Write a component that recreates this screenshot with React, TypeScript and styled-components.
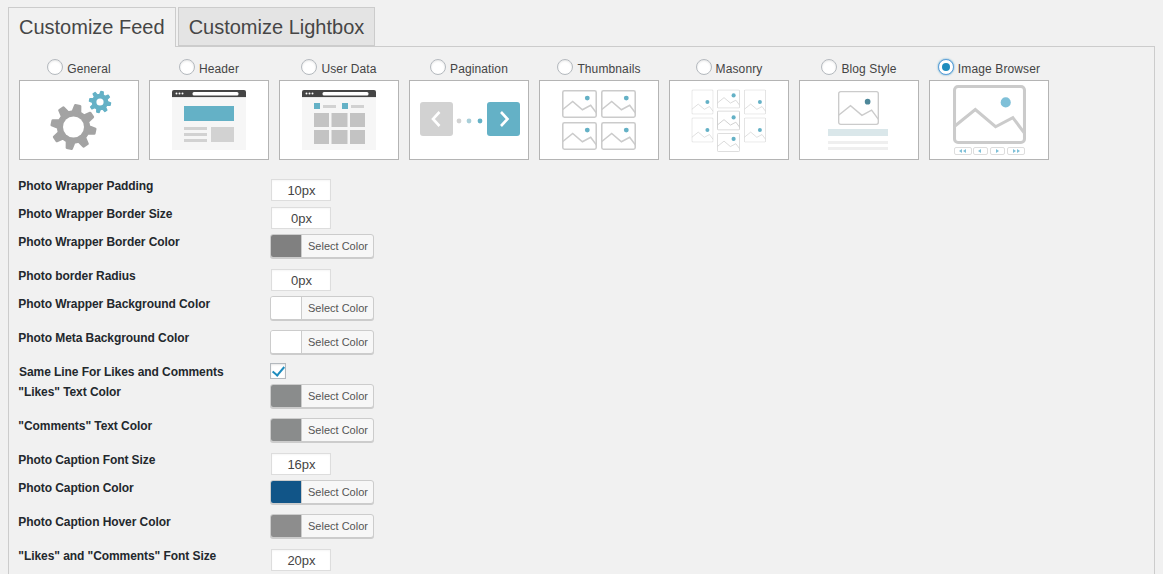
import React from "react";
import styled, { createGlobalStyle } from "styled-components";

const Global = createGlobalStyle`
  html, body { margin: 0; padding: 0; background: #f1f1f1; height: 574px; overflow: hidden; }
  body { font-family: "Liberation Sans", Arial, sans-serif; color: #444; }
`;

const Page = styled.div`
  padding: 7px 8px 0;
`;
const Tabs = styled.div`
  display: flex;
  gap: 2px;
  height: 39px;
  position: relative;
  z-index: 1;
`;
const Tab = styled.div<{ $active?: boolean }>`
  box-sizing: border-box;
  height: ${(p) => (p.$active ? "40px" : "39px")};
  padding: 0 10px;
  font-size: 20px;
  line-height: 38px;
  color: #464646;
  background: ${(p) => (p.$active ? "#f1f1f1" : "#e4e4e4")};
  border: 1px solid #ccc;
  border-bottom: ${(p) => (p.$active ? "0" : "1px solid #ccc")};
`;
const Panel = styled.div`
  box-sizing: border-box;
  border: 1px solid #ccc;
  width: 1147px;
  height: 560px;
  padding: 12px 10px 0 10px;
`;
const Chooser = styled.div`
  display: flex;
  gap: 10px;
  margin-bottom: 16px;
`;
const Choice = styled.label`
  width: 120px;
  display: flex;
  flex-direction: column;
  align-items: center;
`;
const ChoiceHead = styled.span`
  height: 21px;
  display: flex;
  align-items: flex-start;
  gap: 4px;
  font-size: 12px;
  line-height: 18px;
  letter-spacing: 0.12px;
  color: #444;
  white-space: nowrap;
  span { padding-top: 1px; }
`;
const Radio = styled.input.attrs({ type: "radio", readOnly: true })`
  appearance: none;
  box-sizing: border-box;
  width: 16px;
  height: 16px;
  margin: 0;
  border-radius: 50%;
  border: 1px solid #b4b9be;
  background: #fff;
  box-shadow: inset 0 1px 2px rgba(0, 0, 0, 0.1);
  display: grid;
  place-items: center;
  &:checked {
    border-color: #5b9dd9;
    box-shadow: 0 0 2px rgba(30, 140, 190, 0.8);
  }
  &:checked::before {
    content: "";
    width: 8px;
    height: 8px;
    border-radius: 50%;
    background: #1e8cbe;
  }
`;
const Thumb = styled.svg`
  display: block;
  box-sizing: border-box;
  width: 120px;
  height: 80px;
  background: #fff;
  border: 1px solid #b4b4b4;
`;
const Row = styled.div<{ $h: number }>`
  display: grid;
  grid-template-columns: 251px 1fr;
  height: ${(p) => p.$h}px;
`;
const Label = styled.div<{ $flush?: boolean }>`
  font-size: 12px;
  font-weight: 700;
  line-height: 16px;
  letter-spacing: -0.07px;
  color: #23282d;
  padding-top: 2px;
  margin-left: ${(p) => (p.$flush ? "0" : "-0.7px")};
  white-space: nowrap;
`;
const Field = styled.input.attrs({ type: "text", readOnly: true })`
  box-sizing: border-box;
  display: block;
  width: 60px;
  height: 22px;
  margin: 3px 0 0 1px;
  padding: 0 0 0 1px;
  border: 1px solid #ddd;
  background: #fff;
  box-shadow: inset 0 1px 2px rgba(0, 0, 0, 0.04);
  font: 13px "Liberation Sans", Arial, sans-serif;
  color: #444;
  text-align: center;
  outline: none;
`;
const ColorButton = styled.button`
  box-sizing: border-box;
  display: flex;
  width: 104px;
  height: 24px;
  margin: 2px 0 0;
  padding: 0;
  border: 1px solid #ccc;
  border-radius: 3px;
  background: #f7f7f7;
  box-shadow: 0 1px 0 #ccc;
  overflow: hidden;
`;
const Swatch = styled.span`
  width: 30px;
  height: 100%;
  flex: none;
  border-right: 1px solid #ccc;
`;
const ColorText = styled.span`
  flex: 1;
  padding-left: 1px;
  font: 11px/22px "Liberation Sans", Arial, sans-serif;
  color: #555;
  text-align: center;
`;
const Check = styled.input.attrs({ type: "checkbox", readOnly: true })`
  appearance: none;
  box-sizing: border-box;
  display: grid;
  place-items: center;
  width: 16px;
  height: 16px;
  margin: 1px 0 0 0;
  border: 1px solid #b4b9be;
  background: #fff;
  box-shadow: inset 0 1px 2px rgba(0, 0, 0, 0.1);
  &:checked::before {
    content: "";
    width: 5px;
    height: 10px;
    margin-top: -2px;
    border: solid #1e8cbe;
    border-width: 0 2.4px 2.4px 0;
    transform: rotate(40deg);
  }
`;

const gearPath = (cx: number, cy: number, rOut: number, rIn: number, hole: number, teeth: number) => {
  const pts: string[] = [];
  const step = (Math.PI * 2) / teeth;
  for (let i = 0; i < teeth; i++) {
    const a = i * step - Math.PI / 2 + step / 4;
    const list: [number, number][] = [
      [rIn, a - step * 0.3],
      [rOut, a - step * 0.14],
      [rOut, a + step * 0.14],
      [rIn, a + step * 0.3],
    ];
    list.forEach(([r, t]) => pts.push(`${(cx + r * Math.cos(t)).toFixed(2)} ${(cy + r * Math.sin(t)).toFixed(2)}`));
  }
  return `M${pts.join("L")}Z`;
};

const BLUE = "#64b1c6";
const GREY = "#d2d2d2";

type PicProps = { x: number; y: number; w: number; h: number; dot?: string; sw?: number; line?: string; dotR?: number };

const Pic = ({ x, y, w, h, dot = BLUE, sw = 3, line = "#cbcbcb", dotR = 5 }: PicProps) => {
  const vh = (h * 72) / w;
  return (
    <svg x={x} y={y} width={w} height={h} viewBox={`0 0 72 ${vh}`}>
      <rect x={sw / 2} y={sw / 2} width={72 - sw} height={vh - sw} rx="3.5" fill="#fff" stroke={line} strokeWidth={sw} />
      <g transform={`translate(0 ${vh - 58})`}>
        <path d="M1 41L22 24L42 41L59 32L71 48" fill="none" stroke={line} strokeWidth={sw} />
        <circle cx="52" cy="17" r={dotR} fill={dot} />
      </g>
    </svg>
  );
};

const Browser = ({ children }: { children: React.ReactNode }) => (
  <>
    <rect x="22" y="9" width="74" height="60" fill="#f6f6f6" />
    <path d="M22 16v-5a2 2 0 0 1 2-2h70a2 2 0 0 1 2 2v5Z" fill="#444" />
    <rect x="22" y="16" width="74" height="1" fill="#e6e6e6" />
    <rect x="42.5" y="11" width="46" height="3.4" rx="1.5" fill="#fff" />
    <circle cx="26.5" cy="12.5" r="1" fill="#fff" />
    <circle cx="29.5" cy="12.5" r="1" fill="#fff" />
    <circle cx="32.5" cy="12.5" r="1" fill="#fff" />
    {children}
  </>
);

const GeneralArt = () => (
  <>
    <path d={gearPath(53.5, 46, 21.8, 15.5, 0, 8)} fill="#a3a3a3" stroke="#a3a3a3" strokeWidth="2.6" strokeLinejoin="round" />
    <circle cx="53.5" cy="46" r="10.5" fill="#fff" />
    <path d={gearPath(80, 21, 10.6, 7.6, 0, 8)} fill={BLUE} stroke={BLUE} strokeWidth="1.4" strokeLinejoin="round" />
    <circle cx="80" cy="21" r="3.6" fill="#fff" />
  </>
);
const HeaderArt = () => (
  <Browser>
    <rect x="34" y="25" width="50" height="15" fill={BLUE} />
    <rect x="34" y="46" width="23" height="3" fill={GREY} />
    <rect x="34" y="52" width="23" height="3" fill={GREY} />
    <rect x="34" y="58" width="23" height="3" fill={GREY} />
    <rect x="61" y="46" width="23" height="15" fill={GREY} />
  </Browser>
);
const UserDataArt = () => (
  <Browser>
    <rect x="34" y="22" width="6" height="6" fill={BLUE} />
    <rect x="43" y="24" width="13" height="3" fill={GREY} />
    <rect x="62" y="22" width="6" height="6" fill={BLUE} />
    <rect x="71" y="24" width="13" height="3" fill={GREY} />
    {[32, 49.5, 68].flatMap((x, i) =>
      [32, 49].map((y) => <rect key={`${x}-${y}`} x={x + 2} y={y} width={i === 1 ? 16 : 15} height="14" fill="#c3c3c3" />)
    )}
  </Browser>
);
const PaginationArt = () => (
  <>
    <rect x="10" y="21" width="33" height="34" rx="3" fill={GREY} />
    <rect x="77" y="21" width="33" height="34" rx="3" fill={BLUE} />
    <path d="M29.5 31L23 38L29.5 45" fill="none" stroke="#fff" strokeWidth="2.6" />
    <path d="M91 31L97.5 38L91 45" fill="none" stroke="#fff" strokeWidth="2.6" />
    <circle cx="49" cy="40" r="2.4" fill={GREY} />
    <circle cx="59" cy="40" r="2.4" fill="#a9cfd9" />
    <circle cx="70" cy="40" r="2.4" fill={BLUE} />
  </>
);
const ThumbnailsArt = () => (
  <>
    {[22, 61].flatMap((x) =>
      [9, 41].map((y) => <Pic key={`${x}-${y}`} x={x} y={y} w={35} h={28} sw={3.2} />)
    )}
  </>
);
const MasonryArt = () => (
  <>
    <Pic x={21.5} y={8.5} w={22} h={25} sw={2.4} line="#d4d4d4" dotR={6.5} />
    <Pic x={21.5} y={36.5} w={22} h={25} sw={2.4} line="#d4d4d4" dotR={6.5} />
    <Pic x={47} y={8.5} w={23} h={19} sw={2.6} line="#d4d4d4" dotR={6.5} />
    <Pic x={47} y={29.5} w={23} h={20} sw={3} line="#cfcfcf" dotR={6.5} />
    <Pic x={47} y={52} w={23} h={19} sw={2.6} line="#d4d4d4" dotR={6.5} />
    <Pic x={74} y={8.5} w={22} h={25} sw={2.4} line="#d4d4d4" dotR={6.5} />
    <Pic x={74} y={36.5} w={22} h={25} sw={2.4} line="#d4d4d4" dotR={6.5} />
  </>
);
const BlogArt = () => (
  <>
    <Pic x={38} y={10} w={41} h={34} sw={2.4} dot="#4d8799" />
    <rect x="28" y="48" width="60" height="7" fill="#dae7ea" />
    <rect x="28" y="60" width="60" height="3" fill="#efefef" />
    <rect x="28" y="66" width="60" height="3" fill="#efefef" />
  </>
);
const Ctl = ({ x, w, d }: { x: number; w: number; d: string }) => (
  <>
    <rect x={x + 0.5} y="66.5" width={w} height="7" rx="1.5" fill="#fff" stroke="#ddd" />
    <path d={d} fill="#7fc0d8" />
  </>
);
const BrowserArt = () => (
  <>
    <Pic x={23} y={4} w={73} h={59} sw={3} dot="#7fc0d8" />
    <Ctl x={24} w={17} d="M32 68v4l-3-2ZM36 68v4l-3-2Z" />
    <Ctl x={43} w={14} d="M51 68v4l-3-2Z" />
    <Ctl x={60} w={14} d="M66 68v4l3-2Z" />
    <Ctl x={77} w={17} d="M83 68v4l3-2ZM87 68v4l3-2Z" />
  </>
);

const choices: [string, React.FC, boolean?][] = [
  ["General", GeneralArt],
  ["Header", HeaderArt],
  ["User Data", UserDataArt],
  ["Pagination", PaginationArt],
  ["Thumbnails", ThumbnailsArt],
  ["Masonry", MasonryArt],
  ["Blog Style", BlogArt],
  ["Image Browser", BrowserArt, true],
];

type Setting =
  | { label: string; kind: "text"; value: string; h: number }
  | { label: string; kind: "color"; color: string; h: number }
  | { label: string; kind: "check"; h: number };

const settings: Setting[] = [
  { label: "Photo Wrapper Padding", kind: "text", value: "10px", h: 28 },
  { label: "Photo Wrapper Border Size", kind: "text", value: "0px", h: 28 },
  { label: "Photo Wrapper Border Color", kind: "color", color: "#808080", h: 34 },
  { label: "Photo border Radius", kind: "text", value: "0px", h: 28 },
  { label: "Photo Wrapper Background Color", kind: "color", color: "#ffffff", h: 34 },
  { label: "Photo Meta Background Color", kind: "color", color: "#ffffff", h: 34 },
  { label: "Same Line For Likes and Comments", kind: "check", h: 20 },
  { label: '"Likes" Text Color', kind: "color", color: "#8a8c8c", h: 34 },
  { label: '"Comments" Text Color', kind: "color", color: "#8a8c8c", h: 34 },
  { label: "Photo Caption Font Size", kind: "text", value: "16px", h: 28 },
  { label: "Photo Caption Color", kind: "color", color: "#115588", h: 34 },
  { label: "Photo Caption Hover Color", kind: "color", color: "#8d8d8d", h: 34 },
  { label: '"Likes" and "Comments" Font Size', kind: "text", value: "20px", h: 28 },
];

export default function App() {
  return (
    <Page>
      <Global />
      <Tabs>
        <Tab $active>Customize Feed</Tab>
        <Tab>Customize Lightbox</Tab>
      </Tabs>
      <Panel>
        <Chooser>
          {choices.map(([name, Art, checked]) => (
            <Choice key={name}>
              <ChoiceHead>
                <Radio name="style" defaultChecked={!!checked} />
                <span>{name}</span>
              </ChoiceHead>
              <Thumb viewBox="0 0 118 78">
                <Art />
              </Thumb>
            </Choice>
          ))}
        </Chooser>
        {settings.map((s) => (
          <Row key={s.label} $h={s.h}>
            <Label $flush={s.kind === "check"}>{s.label}</Label>
            <div>
              {s.kind === "text" && <Field defaultValue={s.value} />}
              {s.kind === "color" && (
                <ColorButton type="button">
                  <Swatch style={{ background: s.color }} />
                  <ColorText>Select Color</ColorText>
                </ColorButton>
              )}
              {s.kind === "check" && <Check defaultChecked />}
            </div>
          </Row>
        ))}
      </Panel>
    </Page>
  );
}
